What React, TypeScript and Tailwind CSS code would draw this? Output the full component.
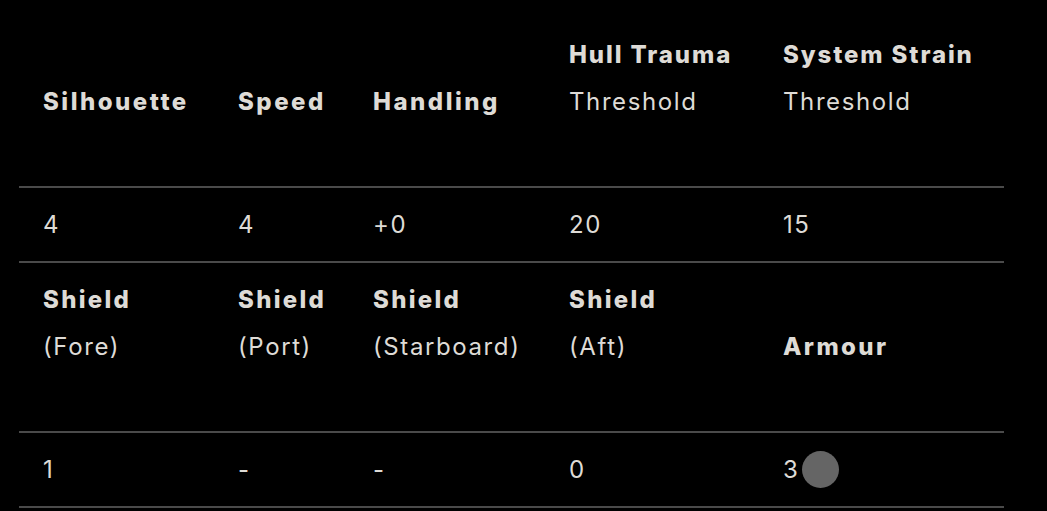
import React from 'react';

const cols = ['w-[195px]', 'w-[135px]', 'w-[196px]', 'w-[214px]', 'w-[245px]'];

export default function App() {
  const row1: [string | undefined, string][] = [
    [undefined, 'Silhouette'],
    [undefined, 'Speed'],
    [undefined, 'Handling'],
    ['Hull Trauma', 'Threshold'],
    ['System Strain', 'Threshold'],
  ];
  const row3: [string, string][] = [
    ['Shield', '(Fore)'],
    ['Shield', '(Port)'],
    ['Shield', '(Starboard)'],
    ['Shield', '(Aft)'],
  ];

  return (
    <div className="h-[511px] w-[1047px] overflow-hidden bg-black pl-[19px] pt-[18px]"
      style={{ fontFamily: 'Inter, "Noto Sans", sans-serif' }}>
      <table className="w-[985px] table-fixed border-collapse text-[24px] leading-[47px] tracking-[1.6px] text-[#dedbd6]">
        <tbody>
          <tr className="border-b-2 border-[#4a4a4a]">
            {row1.map(([t, s], i) => (
              <th key={i} className={`${cols[i]} pl-6 pr-0 pt-[13px] pb-[61px] align-bottom text-left font-normal whitespace-nowrap`}>
                {t && <div className="font-extrabold tracking-[1.9px]">{t}</div>}
                <div className={t ? '' : 'font-extrabold tracking-[2.5px]'}>{s}</div>
              </th>
            ))}
          </tr>
          <tr className="border-b-2 border-[#4a4a4a]">
            {['4', '4', '+0', '20', '15'].map((v, i) => (
              <td key={i} className="pl-6 py-[13px]">{v}</td>
            ))}
          </tr>
          <tr className="border-b-2 border-[#4a4a4a]">
            {row3.map(([t, s], i) => (
              <th key={i} className={`${cols[i]} pl-6 pr-0 pt-[13px] pb-[61px] align-bottom text-left font-normal whitespace-nowrap`}>
                <div className="font-extrabold tracking-[2.3px]">{t}</div>
                <div>{s}</div>
              </th>
            ))}
            <th className="pl-6 pr-0 pt-[13px] pb-[61px] align-bottom text-left font-extrabold tracking-[2.4px]">Armour</th>
          </tr>
          <tr className="border-b-2 border-[#4a4a4a]">
            {['1', '-', '-', '0'].map((v, i) => (
              <td key={i} className="pl-6 py-[13px]">{v}</td>
            ))}
            <td className="pl-6 py-[13px]">
              <div className="flex items-center">
                <span className="tracking-normal">3</span>
                <span className="ml-[4px] inline-block h-[37px] w-[37px] rounded-full bg-[#656565]" />
              </div>
            </td>
          </tr>
        </tbody>
      </table>
    </div>
  );
}
